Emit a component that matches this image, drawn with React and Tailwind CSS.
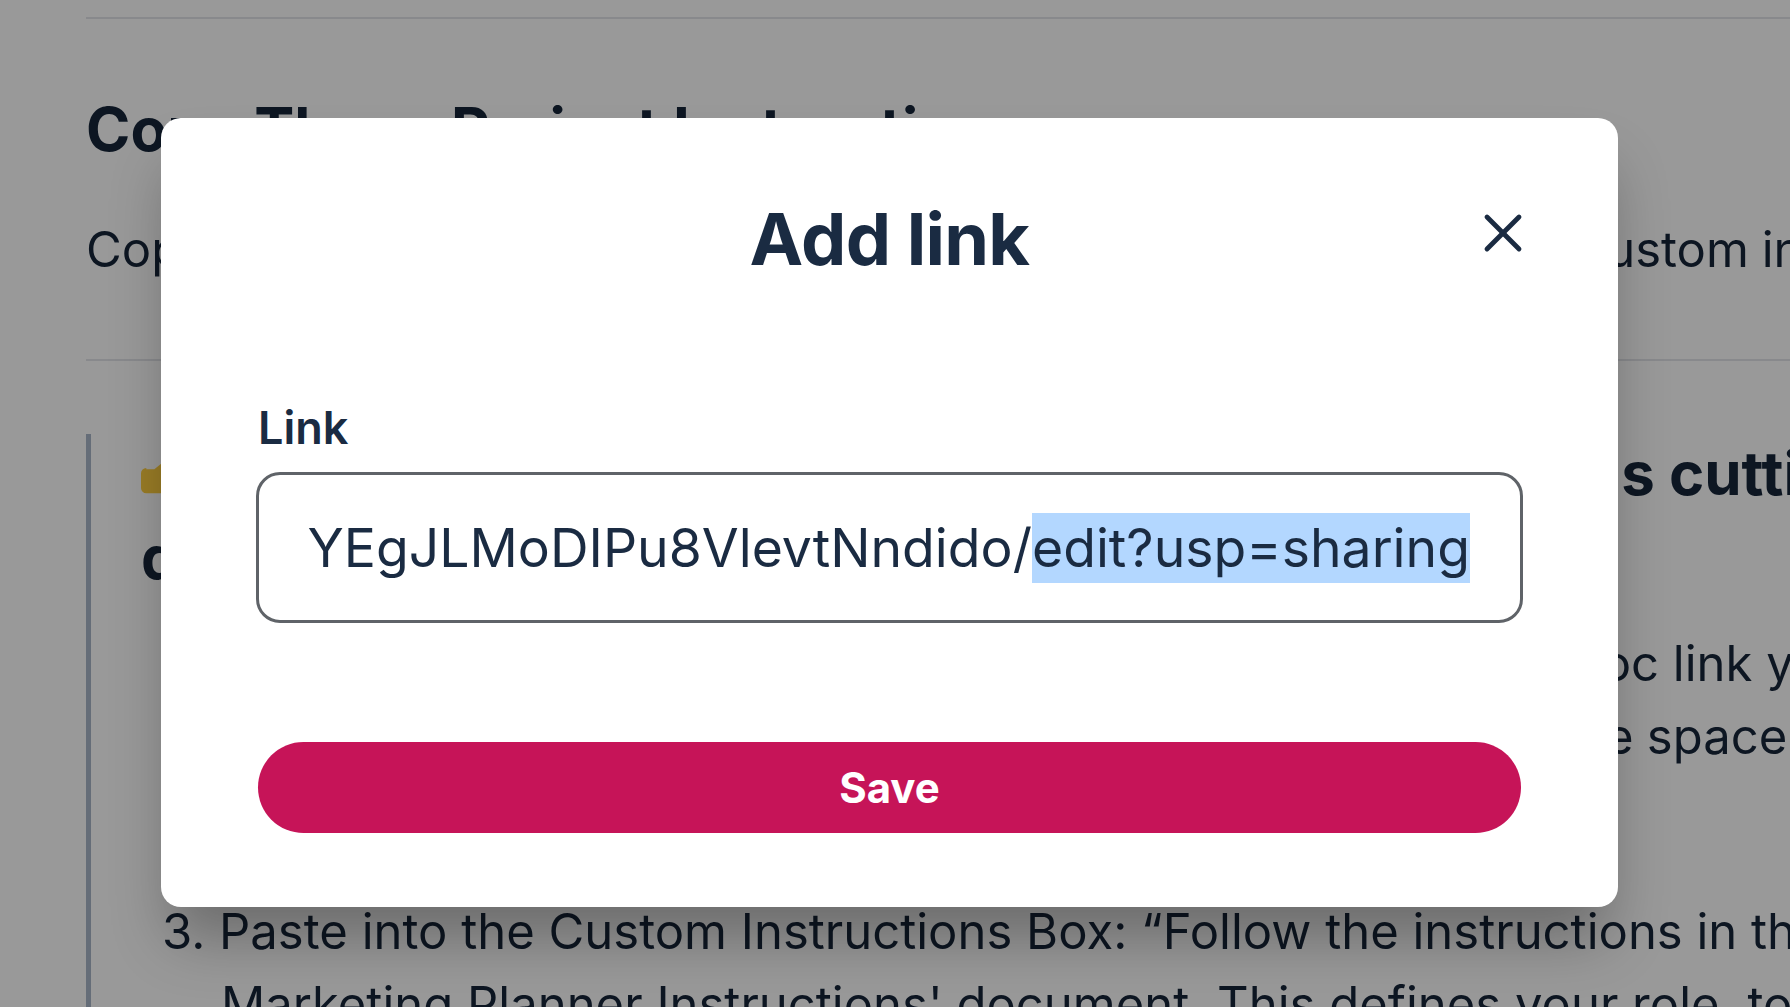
import { X } from "lucide-react";

function Backdrop() {
  return (
    <div className="h-full overflow-hidden bg-white pl-[86px] pt-[17px] text-[#17263a] whitespace-nowrap">
      <div className="h-[2px] bg-[#e3e5e9]" />
      <h2 className="mt-[74px] text-[60px] leading-[72px] font-bold">Copy These Project Instructions</h2>
      <p className="mt-[48px] text-[49px] leading-[73px] [word-spacing:-1px]">Copy these instructions and paste them in your ChatGPT project custom instructions.</p>
      <div className="mt-[73px] h-[2px] bg-[#e3e5e9]" />
      <div className="mt-[73px] flow-root h-[700px] border-l-[5px] border-[#a9b6c9] pl-[50px]">
        <h3 className="-mt-[3px] text-[60px] leading-[84px] font-bold">
          <svg viewBox="0 0 24 24" className="mr-[13px] inline-block h-[64px] w-[64px] align-[-5px]">
            <path d="M2 12.500h3l3-2.500 5-8.500c2 0 3 1 3 3l-1 4h6c2 0 2 2 2 3l-3 9c-.5 1-1 1-2 1H2a2 2 0 0 1-2-2v-5.500a2 2 0 0 1 2-2z" fill="#ffcf40" />
          </svg>{" "}
          Save your marketing planner instruction doc, it's cutting
          <br />
          down your setup time
        </h3>
        <ol className="mt-[28px] text-[49px] leading-[73px]">
          <li className="pl-[21px]">1. Copy the instructions below, then open the shared Google Doc link you were given</li>
          <li className="pl-[21px] [word-spacing:-0.5px]">2. Make your copy, then open the project's settings and find the space</li>
          <li className="pt-[122px] pl-[21px]">
            3. Paste into the Custom Instructions Box: “Follow the instructions in the
            <br />
            <span className="pl-[59px]">Marketing Planner Instructions' document. This defines your role, tone</span>
          </li>
        </ol>
      </div>
    </div>
  );
}

export default function App() {
  return (
    <div className="relative h-[1007px] w-[1790px] overflow-hidden font-['Inter',sans-serif]">
      <Backdrop />
      <div className="absolute inset-0 bg-black/40 pl-[161px] pt-[118px]">
        <div className="h-[789px] w-[1457px] rounded-[20px] bg-white px-[97px] pt-[86px] text-[#1a2b42] shadow-[0_40px_60px_-10px_rgba(0,0,0,0.3)]">
          <div className="grid h-[70px] grid-cols-[1fr_auto_1fr] items-center">
            <div />
            <h1 className="text-[72px] leading-[70px] font-bold tracking-[-0.01em]">Add link</h1>
            <button className="justify-self-end -translate-x-[2px] -translate-y-[6px]">
              <X size={64} strokeWidth={1.8} className="-m-[16px]" />
            </button>
          </div>
          <label className="mt-[127px] block text-[45px] leading-[54px] font-semibold">Link</label>
          <div className="-mx-[2px] mt-[17px] flex h-[151px] items-center justify-end overflow-hidden rounded-[24px] border-[3px] border-[#5f6368] px-[50px] text-[53.5px] leading-[68px] whitespace-nowrap">
            YEgJLMoDIPu8VlevtNndido/<span className="bg-[#b3d7ff] py-[1px]">edit?usp=sharing</span>
          </div>
          <button className="mt-[119px] h-[91px] w-full rounded-full bg-[#c61458] text-[42px] font-bold text-white">Save</button>
        </div>
      </div>
    </div>
  );
}
